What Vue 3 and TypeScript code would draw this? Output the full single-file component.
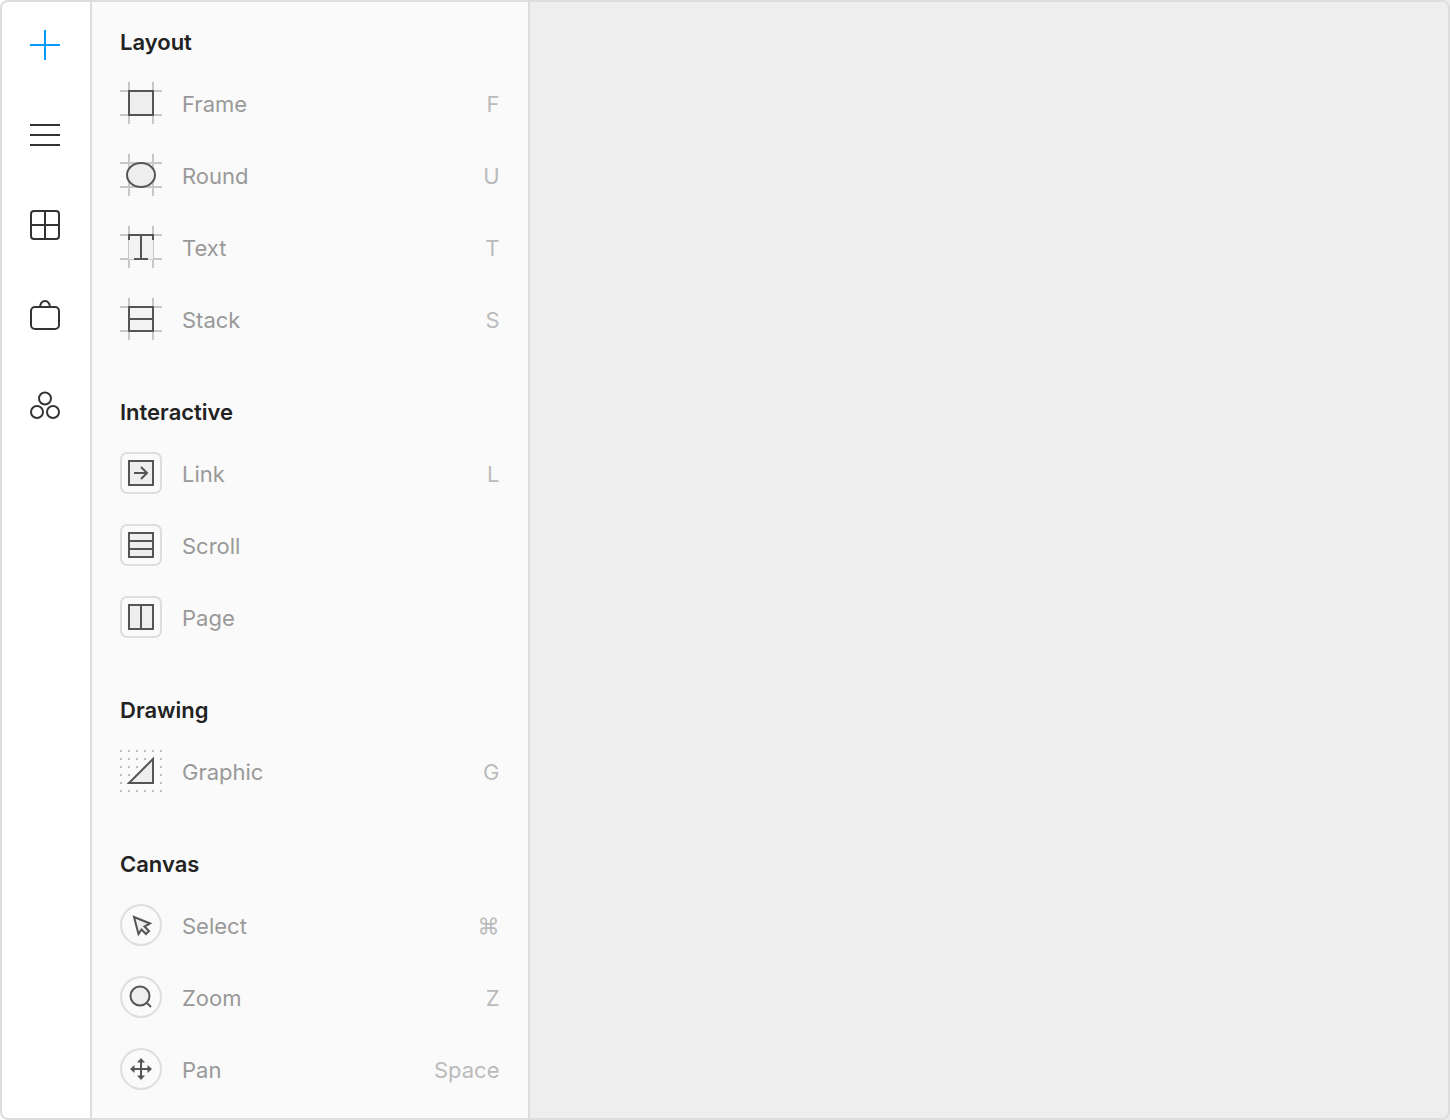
<template>
  <div class="window">
    <nav class="rail">
      <div v-for="icon in railIcons" :key="icon.name" class="rail-cell">
        <svg width="34" height="34" viewBox="0 0 34 34" fill="none" :stroke="icon.color" stroke-width="2" v-html="icon.svg" />
      </div>
    </nav>
    <aside class="panel">
      <section v-for="section in sections" :key="section.title" class="section">
        <h2 class="heading">{{ section.title }}</h2>
        <div v-for="item in section.items" :key="item.label" class="row">
          <span class="icon-box" :class="section.box">
            <svg width="42" height="42" viewBox="0 0 42 42" fill="none" v-html="item.svg" />
          </span>
          <span class="label">{{ item.label }}</span>
          <span class="shortcut">{{ item.key }}</span>
        </div>
      </section>
    </aside>
    <main class="canvas" />
  </div>
</template>

<script setup lang="ts">
interface Item {
  label: string
  key: string
  svg: string
}

interface Section {
  title: string
  box: string
  items: Item[]
}

const dark = 'stroke="#555" stroke-width="2"'
const guides =
  '<path d="M9 0v42M33 0v42M0 9h42M0 33h42" stroke="#c8c8c8" stroke-width="2"/>'

const railIcons = [
  { name: 'add', color: '#0099ff', svg: '<path d="M17 2v30M2 17h30"/>' },
  { name: 'menu', color: '#333', svg: '<path d="M2 7h30M2 17h30M2 27h30"/>' },
  {
    name: 'grid',
    color: '#333',
    svg: '<rect x="3" y="3" width="28" height="28" rx="3"/><path d="M17 3v28M3 17h28"/>',
  },
  {
    name: 'store',
    color: '#333',
    svg: '<rect x="3" y="9" width="28" height="22" rx="4"/><path d="M12 9c0-3 2-6 5-6s5 3 5 6"/>',
  },
  {
    name: 'components',
    color: '#333',
    svg: '<circle cx="17" cy="10.500" r="6"/><circle cx="9" cy="24" r="6"/><circle cx="25" cy="24" r="6"/>',
  },
]

const sections: Section[] = [
  {
    title: 'Layout',
    box: 'plain',
    items: [
      { label: 'Frame', key: 'F', svg: `${guides}<rect x="9" y="9" width="24" height="24" fill="#eee" ${dark}/>` },
      { label: 'Round', key: 'U', svg: `${guides}<ellipse cx="21" cy="21" rx="14" ry="12" fill="#eee" ${dark}/>` },
      { label: 'Text', key: 'T', svg: `${guides}<rect x="9" y="9" width="24" height="24" fill="#f3f3f3"/><path d="M9 14V9h24v5M21 9v24M14 33h14" ${dark}/>` },
      { label: 'Stack', key: 'S', svg: `${guides}<rect x="9" y="9" width="24" height="24" fill="#f3f3f3" ${dark}/><path d="M9 21h24" ${dark}/>` },
    ],
  },
  {
    title: 'Interactive',
    box: 'square',
    items: [
      { label: 'Link', key: 'L', svg: `<rect x="9" y="9" width="24" height="24" fill="#eee" ${dark}/><path d="M14 21h13M21 15l6 6-6 6" ${dark}/>` },
      { label: 'Scroll', key: '', svg: `<rect x="9" y="9" width="24" height="24" fill="#eee" ${dark}/><path d="M9 17h24M9 25h24" ${dark}/>` },
      { label: 'Page', key: '', svg: `<rect x="9" y="9" width="24" height="24" fill="#eee" ${dark}/><path d="M21 9v24" ${dark}/>` },
    ],
  },
  {
    title: 'Drawing',
    box: 'plain',
    items: [
      { label: 'Graphic', key: 'G', svg: `<path d="M0 1h42M0 9h42M0 17h42M0 25h42M0 33h42M0 41h42" stroke="#bbb" stroke-width="2" stroke-dasharray="2 6"/><path d="M33 9v24H9z" fill="#eee" ${dark}/>` },
    ],
  },
  {
    title: 'Canvas',
    box: 'circle',
    items: [
      { label: 'Select', key: '⌘', svg: `<path d="M14 13l16 6.500-5.500 3L29 27l-3 3-4.500-4.500-3 4.500z" fill="#eee" ${dark}/>` },
      { label: 'Zoom', key: 'Z', svg: `<circle cx="20" cy="20" r="9.500" fill="#eee" ${dark}/><path d="M27 27l4 4" ${dark}/>` },
      { label: 'Pan', key: 'Space', svg: `<path d="M21 12v18M12 21h18" ${dark}/><path d="M21 10l4 4.500h-8zM21 32l4-4.500h-8zM10 21l4.500 4v-8zM32 21l-4.500 4v-8z" fill="#555"/>` },
    ],
  },
]
</script>

<style scoped>
.window {
  position: relative;
  display: flex;
  width: 1450px;
  height: 1120px;
  overflow: hidden;
  font-family: Inter, 'Liberation Sans', sans-serif;
  background: #fff;
}

.window::after {
  content: '';
  position: absolute;
  inset: 0;
  border: 2px solid #ddd;
  border-radius: 8px;
  pointer-events: none;
}

.rail {
  flex: 0 0 90px;
  display: flex;
  flex-direction: column;
}

.rail-cell {
  height: 90px;
  display: flex;
  align-items: center;
  justify-content: center;
}

.panel {
  flex: 0 0 436px;
  padding-top: 28px;
  background: #fafafa;
  border-left: 2px solid #ddd;
  border-right: 2px solid #ddd;
}

.section {
  margin-bottom: 42px;
}

.heading {
  margin: 0 0 12px 28px;
  height: 28px;
  font-size: 22px;
  line-height: 28px;
  font-weight: 600;
  color: #222;
}

.row {
  display: flex;
  align-items: center;
  height: 72px;
  padding: 0 28.5px 0 28px;
}

.icon-box {
  flex: 0 0 42px;
  width: 42px;
  height: 42px;
  margin-top: -2px;
  margin-right: 20px;
  position: relative;
}

.icon-box svg {
  position: absolute;
  left: 0;
  top: 0;
}

.icon-box.square,
.icon-box.circle {
  box-shadow: inset 0 0 0 2px #ddd;
  border-radius: 7px;
}

.icon-box.circle {
  border-radius: 50%;
}

.label {
  flex: 1;
  font-size: 22px;
  color: #999;
}

.shortcut {
  font-size: 22px;
  color: #bbb;
}

.canvas {
  flex: 1;
  background: #eee;
}
</style>

<style>
html,
body {
  background: #fff;
}
</style>
